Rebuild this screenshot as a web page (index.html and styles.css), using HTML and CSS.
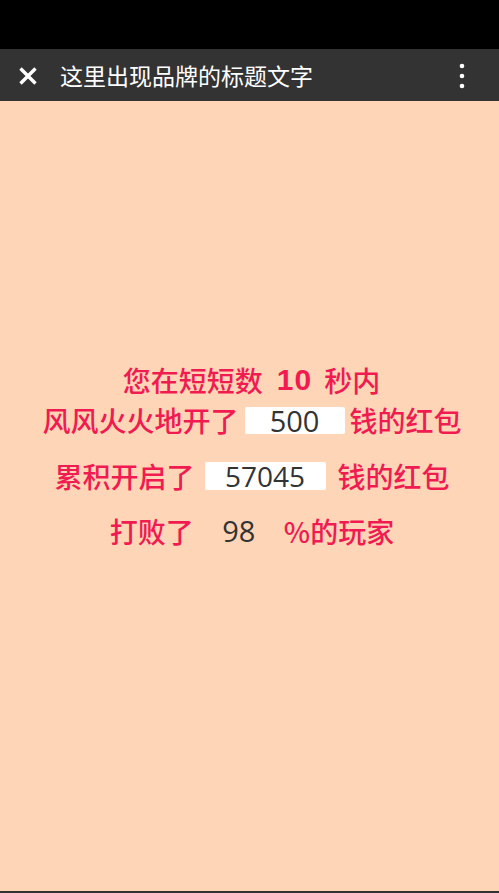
FILE: index.html
```html
<!DOCTYPE html>
<html lang="zh-CN">
<head>
<meta charset="utf-8">
<title>这里出现品牌的标题文字</title>
<link rel="stylesheet" href="styles.css">
</head>
<body>
<div class="page">
  <div class="statusbar"></div>
  <header class="topbar">
    <svg class="close" width="20" height="20" viewBox="0 0 20 20"><path d="M2.5 2.5 L17.5 17.5 M17.5 2.5 L2.5 17.5" stroke="#fff" stroke-width="3.4" stroke-linecap="butt"/></svg>
    <div class="title">这里出现品牌的标题文字</div>
    <svg class="more" width="6" height="26" viewBox="0 0 6 26"><circle cx="3" cy="3" r="2.3" fill="#fff"/><circle cx="3" cy="13" r="2.3" fill="#fff"/><circle cx="3" cy="23" r="2.3" fill="#fff"/></svg>
  </header>
  <main class="content">
    <div class="line line-1">
      <span>您在短短数</span><span class="num-bold">10</span><span>秒内</span>
    </div>
    <div class="line line-2">
      <span>风风火火地开了</span><span class="box box-500">500</span><span>钱的红包</span>
    </div>
    <div class="line line-3">
      <span>累积开启了</span><span class="box box-total">57045</span><span>钱的红包</span>
    </div>
    <div class="line line-4">
      <span>打败了</span><span class="plain-num">98</span><span>%的玩家</span>
    </div>
  </main>
  <div class="bottombar"></div>
</div>
</body>
</html>
```

FILE: styles.css
```css
html, body {
  margin: 0;
  padding: 0;
}
body {
  font-family: "Noto Sans CJK SC", "Noto Sans", sans-serif;
  background: #ffd5b8;
}
.page {
  display: flex;
  flex-direction: column;
  height: 893px;
}
.statusbar {
  height: 49px;
  background: #000;
  flex: none;
}
.topbar {
  height: 52px;
  background: #333333;
  flex: none;
  display: flex;
  align-items: center;
  padding: 0 0 0 18px;
  box-sizing: border-box;
}
.close {
  flex: none;
  margin-top: 1px;
}
.title {
  color: #fff;
  font-size: 23px;
  line-height: 30px;
  margin-left: 22px;
  flex: 1;
  font-weight: 400;
}
.more {
  flex: none;
  margin-right: 34px;
  margin-top: 1px;
}
.content {
  flex: 1;
  padding-top: 259px;
  color: #f01b50;
  font-size: 28px;
  font-weight: 500;
}
.line {
  display: flex;
  justify-content: center;
  align-items: center;
  height: 40px;
  line-height: 40px;
}
.line-1 {
  padding-left: 4px;
}
.line-2 {
  padding-left: 5px;
}
.line-3 {
  margin-top: 16px;
  padding-left: 5px;
}
.line-4 {
  margin-top: 15px;
  padding-left: 5px;
}
.num-bold {
  font-family: "Liberation Sans", Arial, sans-serif;
  font-weight: 700;
  font-size: 30px;
  margin: 0 12px 0 14px;
  letter-spacing: 1px;
}
.box {
  background: #fff;
  color: #333;
  font-family: "Open Sans", "Noto Sans", sans-serif;
  font-weight: 400;
  height: 27px;
  line-height: 27px;
  text-align: center;
  border-radius: 2px;
}
.box-500 {
  width: 100px;
  font-size: 29px;
  margin: 0 5px 0 6px;
}
.box-total {
  width: 121px;
  height: 28px;
  line-height: 28px;
  font-size: 28px;
  margin: 0 12px 0 10px;
}
.plain-num {
  color: #333;
  font-family: "Open Sans", "Noto Sans", sans-serif;
  font-weight: 400;
  font-size: 29px;
  width: 90px;
  text-align: center;
}
.bottombar {
  height: 2px;
  background: #333;
  flex: none;
}
```
